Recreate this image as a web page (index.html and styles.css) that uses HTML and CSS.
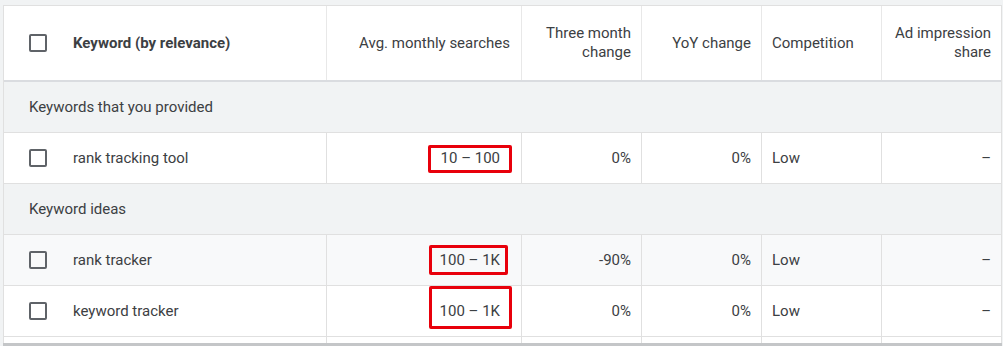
FILE: index.html
```html
<!DOCTYPE html>
<html>
<head>
<meta charset="utf-8">
<link rel="stylesheet" href="styles.css">
</head>
<body>
<div class="page">
  <div class="grid">
    <div class="row head">
      <div class="cell kw"><span class="cb"></span><span class="bold">Keyword (by relevance)</span></div>
      <div class="cell num sep">Avg. monthly searches</div>
      <div class="cell num sep">Three month<br>change</div>
      <div class="cell num sep">YoY change</div>
      <div class="cell txt sep">Competition</div>
      <div class="cell num sep">Ad impression<br>share</div>
    </div>
    <div class="group">Keywords that you provided</div>
    <div class="row data">
      <div class="cell kw"><span class="cb"></span><span>rank tracking tool</span></div>
      <div class="cell num avg sep"><span class="val">10 – 100<span class="mark m1"></span></span></div>
      <div class="cell num sep">0%</div>
      <div class="cell num sep">0%</div>
      <div class="cell txt sep">Low</div>
      <div class="cell num sep">–</div>
    </div>
    <div class="group">Keyword ideas</div>
    <div class="row data hover">
      <div class="cell kw"><span class="cb"></span><span>rank tracker</span></div>
      <div class="cell num avg sep"><span class="val">100 – 1K<span class="mark m2"></span></span></div>
      <div class="cell num sep">-90%</div>
      <div class="cell num sep">0%</div>
      <div class="cell txt sep">Low</div>
      <div class="cell num sep">–</div>
    </div>
    <div class="row data">
      <div class="cell kw"><span class="cb"></span><span>keyword tracker</span></div>
      <div class="cell num avg sep"><span class="val">100 – 1K<span class="mark m3"></span></span></div>
      <div class="cell num sep">0%</div>
      <div class="cell num sep">0%</div>
      <div class="cell txt sep">Low</div>
      <div class="cell num sep">–</div>
    </div>
    <div class="row partial">
      <div class="cell"></div>
      <div class="cell sep"></div>
      <div class="cell sep"></div>
      <div class="cell sep"></div>
      <div class="cell sep"></div>
      <div class="cell sep"></div>
    </div>
  </div>
  <div class="bar"></div>
</div>
</body>
</html>
```

FILE: styles.css
```css
html, body {
  margin: 0;
  padding: 0;
  background: #f1f3f4;
  height: 346px;
  overflow: hidden;
}

.page {
  padding: 5px 2px 0 3px;
  font-family: Roboto, "Liberation Sans", Arial, sans-serif;
  font-size: 15px;
  color: #3c4043;
}

.grid {
  width: 999px;
  box-sizing: border-box;
  border: 1px solid #e0e0e0;
  border-bottom: none;
  background: #fff;
}

.row {
  display: grid;
  grid-template-columns: 322px 195px 120px 120px 120px 120px;
  border-bottom: 1px solid #e0e0e0;
}

.head {
  height: 76px;
  box-sizing: border-box;
  border-bottom: 2px solid #dadce0;
}

.data {
  height: 51px;
  box-sizing: border-box;
}

.hover {
  background: #f8f9fa;
}

.cell {
  box-sizing: border-box;
  display: flex;
  align-items: center;
  line-height: 19px;
}

.sep {
  border-left: 1px solid #e0e0e0;
}

.head .sep {
  border-left-color: #e8e8e8;
}

.kw {
  padding-left: 25px;
  gap: 26px;
}

.num {
  justify-content: flex-end;
  text-align: right;
  padding-right: 10px;
}

.head .num:nth-child(2) {
  padding-right: 11px;
}

.txt {
  padding-left: 10px;
}

.avg {
  padding-right: 21px;
}

.bold {
  font-weight: 700;
}

.cb {
  width: 18px;
  height: 18px;
  box-sizing: border-box;
  border: 2px solid #5f6368;
  border-radius: 2px;
  flex: none;
}

.group {
  height: 51px;
  box-sizing: border-box;
  background: #f1f3f4;
  border-bottom: 1px solid #e0e0e0;
  display: flex;
  align-items: center;
  padding-left: 25px;
  line-height: 19px;
}

.val {
  position: relative;
  display: inline-block;
}

.mark {
  position: absolute;
  box-sizing: border-box;
  border: 3px solid #e8000b;
  border-radius: 2px;
}

.m1 {
  right: -12px;
  width: 84px;
  top: -4px;
  height: 28px;
}

.m2 {
  right: -8px;
  width: 79px;
  top: -6px;
  height: 30px;
}

.m3 {
  right: -12px;
  width: 83px;
  top: -16px;
  height: 43px;
}

.partial {
  height: 6px;
  border-bottom: none;
}

.bar {
  width: 999px;
  height: 4px;
  background: #c4c6c8;
}
```
